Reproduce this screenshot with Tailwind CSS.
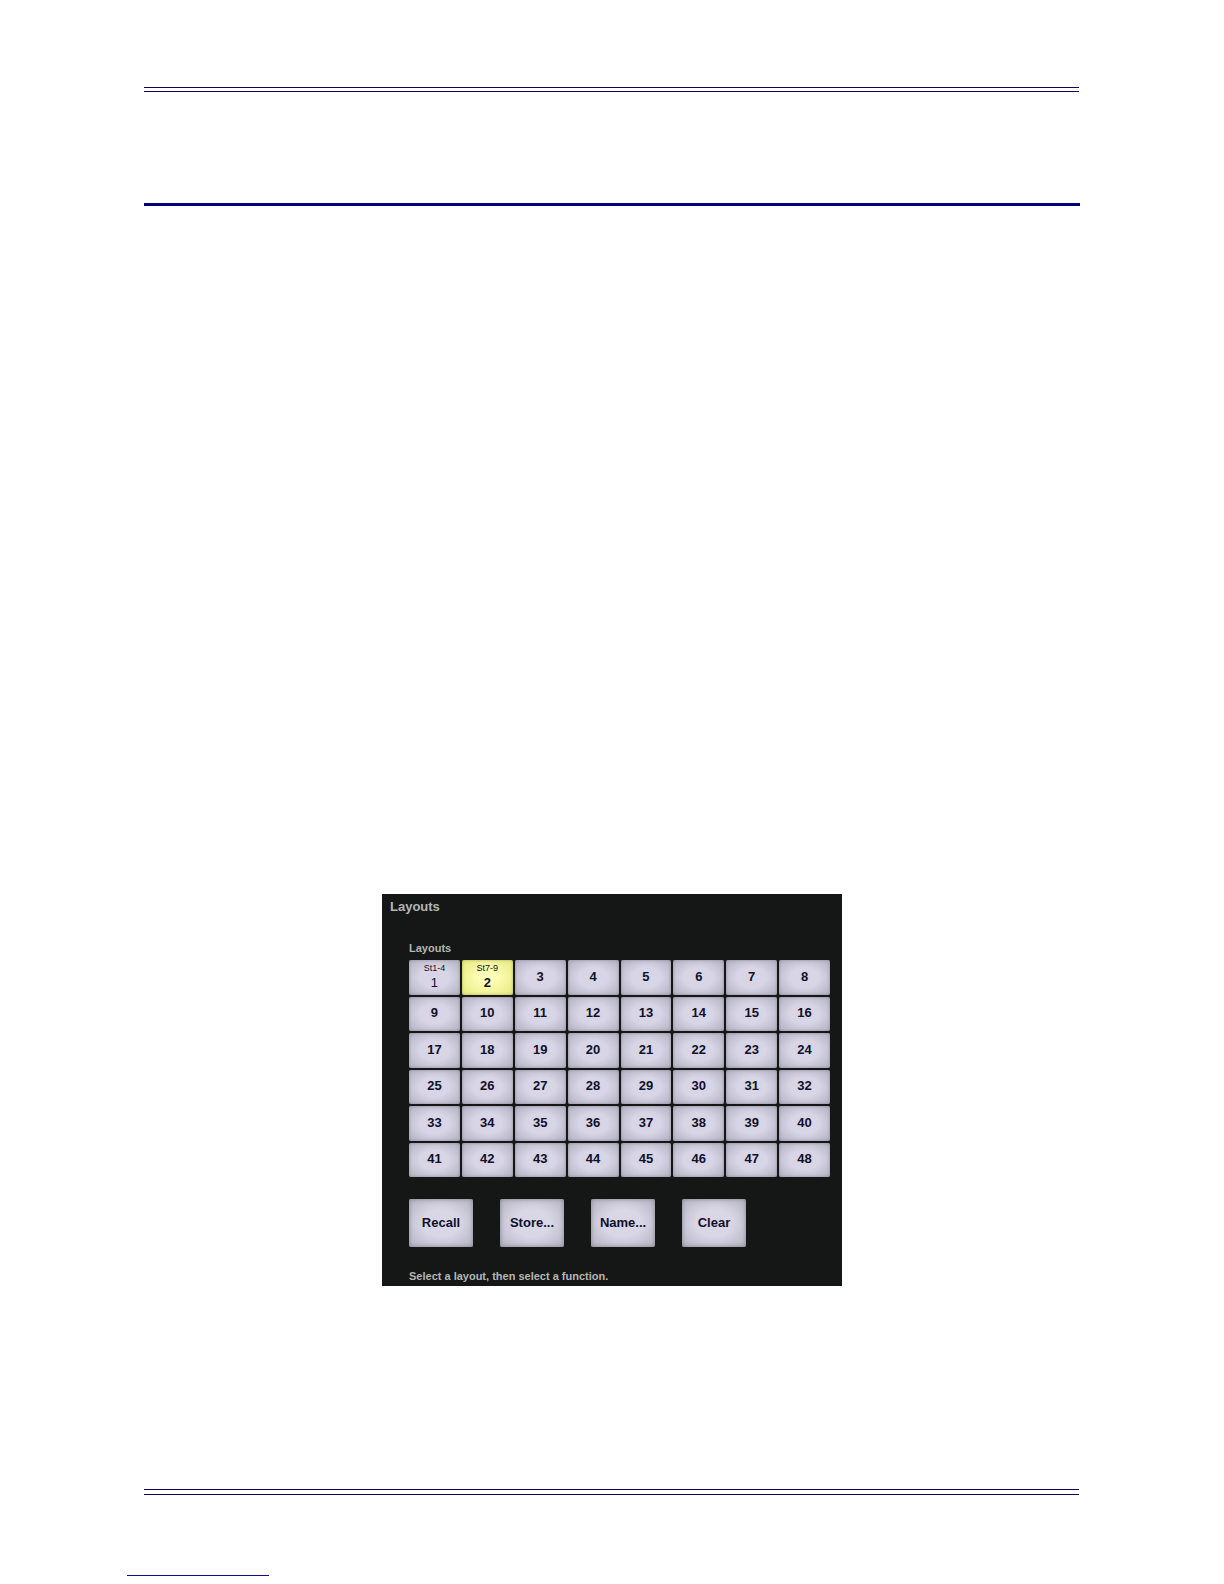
<!DOCTYPE html>
<html lang="en">
<head>
  <meta charset="UTF-8" />
  <meta name="viewport" content="width=device-width, initial-scale=1.0"/>
  <title>Layouts</title>
  <script src="https://cdn.jsdelivr.net/npm/@tailwindcss/browser@4"></script>
</head>
<body class="bg-white min-h-screen flex flex-col font-['Liberation_Sans',Arial,sans-serif]">

  <header class="mx-36 mt-[87px]">
    <div class="h-[5px] mr-px border-y border-[#100060]"></div>
    <div class="mt-[111px] h-[3px] bg-[#000078]"></div>
  </header>

  <main class="mx-auto mt-[688px] w-full max-w-[460px] bg-[#151716] pt-[5px] pb-[2px]">
    <h1 class="pl-2 text-[13px] leading-4 font-bold text-[#b4b6b4]">Layouts</h1>

    <div class="pl-[27px] pr-3">
      <h2 id="gridLabel" class="mt-[26px] mb-[5px] text-[11px] leading-[14px] font-bold text-[#b4b6b4]">Layouts</h2>

      <div id="layouts" role="group" aria-labelledby="gridLabel" class="grid grid-cols-8 grid-rows-6 gap-x-[2px] gap-y-[2px] h-[217px]"></div>

      <div class="mt-[22px] flex gap-[27px]">
        <button class="w-16 h-12 rounded-[2px] bg-radial from-[#d9d6e6] from-40% to-[#b4b1c1] inset-shadow-[0_0_4px_#858390] text-[13px] font-bold text-[#10102a]">Recall</button>
        <button class="w-16 h-12 rounded-[2px] bg-radial from-[#d9d6e6] from-40% to-[#b4b1c1] inset-shadow-[0_0_4px_#858390] text-[13px] font-bold text-[#10102a]">Store...</button>
        <button class="w-16 h-12 rounded-[2px] bg-radial from-[#d9d6e6] from-40% to-[#b4b1c1] inset-shadow-[0_0_4px_#858390] text-[13px] font-bold text-[#10102a]">Name...</button>
        <button class="w-16 h-12 rounded-[2px] bg-radial from-[#d9d6e6] from-40% to-[#b4b1c1] inset-shadow-[0_0_4px_#858390] text-[13px] font-bold text-[#10102a]">Clear</button>
      </div>

      <p class="mt-[22px] text-[11px] leading-[15px] font-bold text-[#b4b6b4]">Select a layout, then select a function.</p>
    </div>
  </main>

  <footer class="mt-[203px]">
    <div class="ml-36 mr-[145px] h-[6px] border-y border-[#100060]"></div>
    <div class="ml-[127px] mt-20 w-[142px] h-px bg-[#10108a]"></div>
  </footer>

  <script>
    const names = { 1: 'St1-4', 2: 'St7-9' };
    const plain = 'bg-radial from-[#d8d5e6] from-40% to-[#b2afc0] inset-shadow-[0_0_3px_#8c8a9a]';
    const selected = 'bg-radial from-[#ffffb8] from-20% to-[#e6e87c] inset-shadow-[0_0_3px_#a8aa58]';

    let html = '';
    for (let i = 1; i <= 48; i++) {
      const name = names[i] ? `<span class="text-[9px] leading-[10px] font-normal">${names[i]}</span>` : '';
      const weight = i === 1 ? 'font-normal' : 'font-bold';
      const space = names[i] ? 'justify-start pt-[3px] gap-[2px]' : 'justify-center pb-px';
      html += `<button aria-pressed="${i === 2}" class="flex flex-col items-center rounded-[2px] text-[13px] leading-4 text-[#10102a] ${space} ${weight} ${i === 2 ? selected : plain}">${name}<span>${i}</span></button>`;
    }
    document.getElementById('layouts').innerHTML = html;
  </script>
</body>
</html>
